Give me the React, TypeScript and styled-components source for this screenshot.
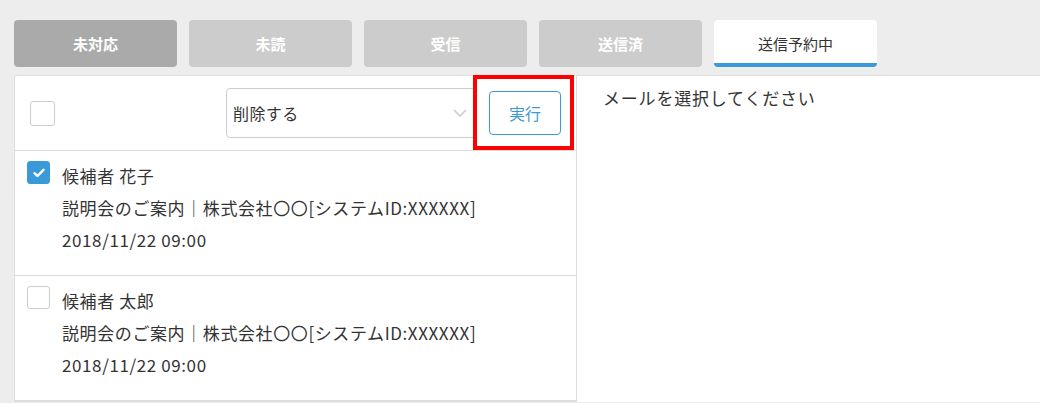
import React, { ReactElement } from 'react';
import styled, { createGlobalStyle } from 'styled-components';

const GlobalStyle = createGlobalStyle`
  body {
    background-color: #ededed;
    color: #333;
    font-family: "Noto Sans CJK JP", "Noto Sans", sans-serif;
    margin: 0;
  }
`;

const Page = styled.div`
  height: 403px;
  overflow: hidden;
`;

const Tabs = styled.div`
  display: flex;
  gap: 12px;
  padding: 20px 14px 8px;
`;

const Tab = styled.div<{ $tone: 'dark' | 'light' | 'active' }>`
  align-items: center;
  background-color: ${({ $tone }) => ($tone === 'dark' ? '#aaa' : $tone === 'light' ? '#ccc' : '#fff')};
  border-bottom: ${({ $tone }) => ($tone === 'active' ? '4px solid #3a99d8' : '0')};
  border-radius: 4px;
  box-sizing: border-box;
  color: ${({ $tone }) => ($tone === 'active' ? '#333' : '#fff')};
  display: flex;
  font-size: 15px;
  font-weight: ${({ $tone }) => ($tone === 'active' ? 400 : 700)};
  height: 47px;
  justify-content: center;
  padding-top: ${({ $tone }) => ($tone === 'active' ? '4px' : '0')};
  width: 163px;
`;

const Main = styled.div`
  display: flex;
  padding-left: 14px;
`;

const ListPanel = styled.div`
  background-color: #fff;
  border: 1px solid #ddd;
  border-radius: 3px 0 0 0;
  width: 561px;
`;

const ListHeader = styled.div`
  align-items: center;
  border-bottom: 1px solid #ddd;
  display: flex;
  height: 74px;
  padding-left: 15px;
  position: relative;
`;

const Box = styled.span<{ $checked?: boolean; $size: number }>`
  align-items: center;
  background-color: ${({ $checked }) => ($checked ? '#3a99d8' : '#fff')};
  border: 1px solid ${({ $checked }) => ($checked ? '#3a99d8' : '#ccc')};
  border-radius: 3px;
  box-sizing: border-box;
  display: inline-flex;
  flex-shrink: 0;
  height: ${({ $size }) => $size}px;
  justify-content: center;
  width: ${({ $size }) => $size}px;
`;

const Select = styled.div`
  align-items: center;
  border: 1px solid #ccc;
  border-radius: 4px;
  box-sizing: border-box;
  display: flex;
  font-size: 16px;
  letter-spacing: 0.4px;
  height: 50px;
  justify-content: space-between;
  margin-left: 171px;
  padding: 0 8px 0 6px;
  width: 250px;
`;

const RunButton = styled.button`
  background-color: #fff;
  border: 1px solid #3a99d8;
  border-radius: 4px;
  color: #3a99d8;
  font-family: inherit;
  font-size: 16px;
  height: 44px;
  margin-left: 13px;
  padding: 0;
  width: 72px;
`;

const Highlight = styled.div`
  border: 4px solid #f00;
  box-sizing: border-box;
  height: 75px;
  left: 458px;
  position: absolute;
  top: -1px;
  width: 101px;
`;

const Row = styled.div`
  border-bottom: 1px solid #ddd;
  box-sizing: border-box;
  display: flex;
  gap: 12px;
  height: 125px;
  padding: 10px 0 0 12px;
`;

const RowBody = styled.div`
  font-size: 17px;
  letter-spacing: 0.6px;
  line-height: 32px;
  margin-top: -1px;
`;

const Line = styled.div`
  white-space: nowrap;
`;

const Detail = styled.div`
  background-color: #fff;
  border-top: 1px solid #ddd;
  flex: 1;
  font-size: 17px;
  letter-spacing: 0.8px;
  padding: 9px 26px;
`;

const mails = [
  { name: '候補者 花子', checked: true },
  { name: '候補者 太郎', checked: false },
];

const tabs: { label: string; tone: 'dark' | 'light' | 'active' }[] = [
  { label: '未対応', tone: 'dark' },
  { label: '未読', tone: 'light' },
  { label: '受信', tone: 'light' },
  { label: '送信済', tone: 'light' },
  { label: '送信予約中', tone: 'active' },
];

function Check(): ReactElement {
  return (
    <svg width="12" height="10" viewBox="0 0 12 10">
      <path d="M1.5 5.2 4.6 8 10.5 1.8" fill="none" stroke="#fff" strokeWidth="2.4" strokeLinecap="round" strokeLinejoin="round" />
    </svg>
  );
}

export default function App(): ReactElement {
  return (
    <Page>
      <GlobalStyle />
      <Tabs>
        {tabs.map((t) => (
          <Tab key={t.label} $tone={t.tone}>{t.label}</Tab>
        ))}
      </Tabs>
      <Main>
        <ListPanel>
          <ListHeader>
            <Box $size={25} />
            <Select>
              <span>削除する</span>
              <svg width="14" height="8" viewBox="0 0 14 8">
                <path d="M1 1 7 7 13 1" fill="none" stroke="#ccc" strokeWidth="1.6" />
              </svg>
            </Select>
            <RunButton>実行</RunButton>
            <Highlight />
          </ListHeader>
          {mails.map((m) => (
            <Row key={m.name}>
              <Box $size={23} $checked={m.checked}>{m.checked && <Check />}</Box>
              <RowBody>
                <Line>{m.name}</Line>
                <Line>説明会のご案内｜株式会社〇〇[システムID:XXXXXX]</Line>
                <Line>2018/11/22 09:00</Line>
              </RowBody>
            </Row>
          ))}
        </ListPanel>
        <Detail>メールを選択してください</Detail>
      </Main>
    </Page>
  );
}
